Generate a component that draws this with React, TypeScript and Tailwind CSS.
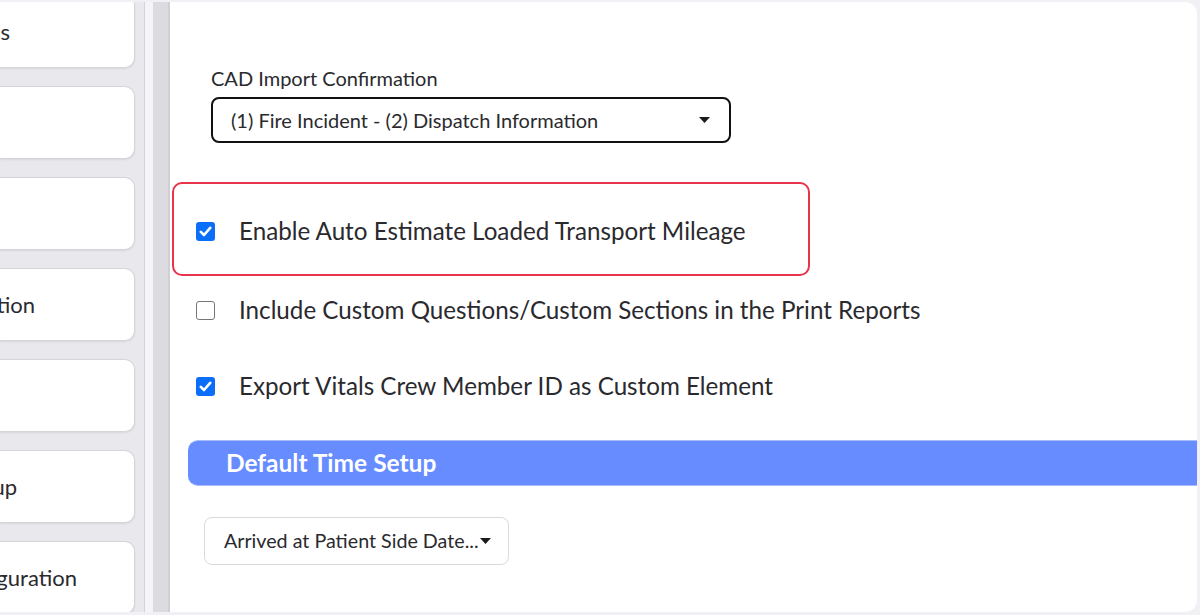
import React from "react";

const font = { fontFamily: "Lato, 'Noto Sans', sans-serif" };

const navCards = [
  { text: "Forms", end: 10 },
  { text: "", end: 0 },
  { text: "", end: 0 },
  { text: "Integration", end: 35 },
  { text: "", end: 0 },
  { text: "Default Setup", end: 17 },
  { text: "Configuration", end: 77 },
];

function NavCard({ text, end }: { text: string; end: number }) {
  return (
    <div className="h-[73px] shrink-0 bg-white border border-l-0 border-[#d4d4d9] rounded-r-[10px] shadow-[0_1px_2px_rgba(0,0,0,0.08)] flex items-center">
      {text && (
        <div className="flex justify-end whitespace-nowrap text-[22px] text-[#2a2a2e]" style={{ width: end }}>
          {text}
        </div>
      )}
    </div>
  );
}

function Check({ checked }: { checked: boolean }) {
  if (checked) {
    return (
      <div className="w-[19px] h-[19px] shrink-0 rounded-[3px] bg-[#0b6ef8] flex items-center justify-center">
        <svg width="13" height="11" viewBox="0 0 13 11">
          <path d="M1.8 5.8 L5 9 L11.2 1.8" fill="none" stroke="white" strokeWidth="2.6" strokeLinecap="round" strokeLinejoin="round" />
        </svg>
      </div>
    );
  }
  return <div className="w-[19px] h-[19px] shrink-0 rounded-[3px] border-[1.5px] border-[#767676] bg-white" />;
}

function Caret() {
  return (
    <svg width="11" height="6" viewBox="0 0 11 6" className="shrink-0">
      <path d="M0 0 H11 L5.5 6 Z" fill="#1a1a1a" />
    </svg>
  );
}

function Row({ checked, label }: { checked: boolean; label: string }) {
  return (
    <div className="flex items-center h-[30px] gap-[24px]">
      <Check checked={checked} />
      <span className="text-[24.2px] text-[#2a2a2e] whitespace-nowrap">{label}</span>
    </div>
  );
}

export default function App() {
  return (
    <div className="w-[1200px] h-[615px] bg-[#f1f1f5] flex pt-[2px] pb-[3px] pr-[3px] overflow-hidden" style={font}>
      <aside className="w-[144px] shrink-0 bg-[#e9e9ed] overflow-hidden pr-[9px]">
        <div className="flex flex-col gap-[18px] -mt-[7px]">
          {navCards.map((c, i) => (
            <NavCard key={i} text={c.text} end={c.end} />
          ))}
        </div>
      </aside>
      <div className="w-px shrink-0 bg-[#d2d2d7]" />
      <div className="w-[8px] shrink-0 bg-[#f5f5f7]" />
      <div className="w-[17px] shrink-0 bg-[#dcdce0] border-r-2 border-[#cfcfd4]" />

      <main className="flex-1 bg-white rounded-r-[12px] overflow-hidden flex flex-col pt-[63px]">
        <div className="pl-[41px] text-[20px] leading-[26px] text-[#2a2a2e] whitespace-nowrap">CAD Import Confirmation</div>
        <div className="ml-[41px] mt-[6px] w-[520px] h-[46px] border-2 border-[#111] rounded-[8px] flex items-center justify-between pl-[18px] pr-[19px]">
          <span className="text-[20px] text-[#2a2a2e] whitespace-nowrap">(1) Fire Incident - (2) Dispatch Information</span>
          <Caret />
        </div>

        <div className="ml-[2px] mt-[39px] w-[638px] h-[94px] border-2 border-[#e8344a] rounded-[10px] flex items-center pl-[22px] pt-[4px]">
          <Row checked label="Enable Auto Estimate Loaded Transport Mileage" />
        </div>

        <div className="ml-[26px] mt-[19px]">
          <Row checked={false} label="Include Custom Questions/Custom Sections in the Print Reports" />
        </div>
        <div className="ml-[26px] mt-[46px]">
          <Row checked label="Export Vitals Crew Member ID as Custom Element" />
        </div>

        <div className="ml-[18px] mt-[39px] h-[46px] bg-[#668cff] rounded-l-[10px] border-y border-[#a9bdfc] flex items-center pl-[38px]">
          <span className="text-[24.5px] font-bold text-white whitespace-nowrap">Default Time Setup</span>
        </div>

        <div className="ml-[34px] mt-[31px] w-[305px] h-[48px] border border-[#d9d9de] rounded-[8px] flex items-center pl-[19px] gap-[1px]">
          <span className="text-[19.7px] text-[#2a2a2e] whitespace-nowrap">Arrived at Patient Side Date...</span>
          <Caret />
        </div>
      </main>
    </div>
  );
}
